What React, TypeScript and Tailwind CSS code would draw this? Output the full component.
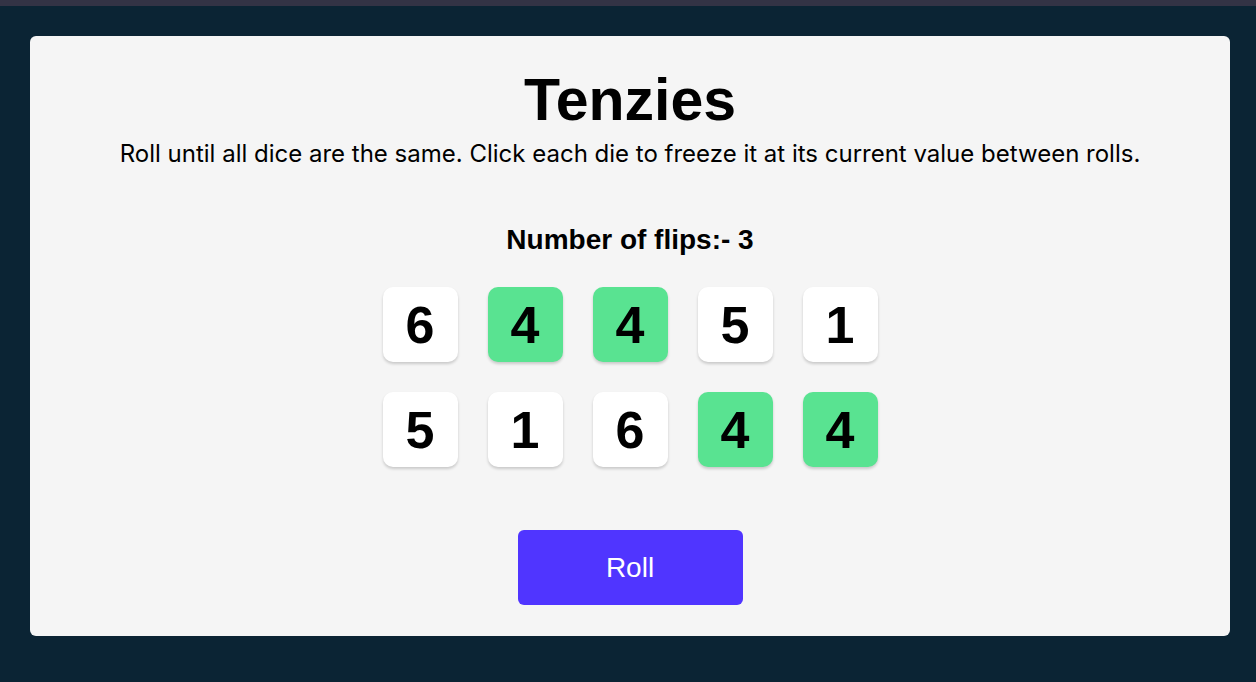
import React from 'react';

const dice = [
  { value: 6, held: false },
  { value: 4, held: true },
  { value: 4, held: true },
  { value: 5, held: false },
  { value: 1, held: false },
  { value: 5, held: false },
  { value: 1, held: false },
  { value: 6, held: false },
  { value: 4, held: true },
  { value: 4, held: true },
];

const Die: React.FC<{ value: number; held: boolean }> = ({ value, held }) => (
  <button
    className={`flex h-[75px] w-[75px] items-center justify-center rounded-[10px] shadow-[0_2px_3px_rgba(0,0,0,0.18)] font-['Liberation_Sans',Arial,sans-serif] text-[52px] font-bold text-black ${
      held ? 'bg-[#59E391]' : 'bg-white'
    }`}
  >
    {value}
  </button>
);

export default function App() {
  return (
    <div className="min-h-screen bg-[#0B2434]">
      <div className="h-[6px] bg-[#333345]" />
      <div className="pl-[30px] pt-[30px]">
        <main className="flex h-[600px] w-[1200px] flex-col items-center rounded-[6px] bg-[#F5F5F5]">
          <h1 className="mt-[31px] font-['Liberation_Sans',Arial,sans-serif] text-[59px] font-bold leading-[66px] text-black">
            Tenzies
          </h1>
          <p className="mt-[6px] font-['Inter',sans-serif] text-[24px] leading-[30px] text-black">
            Roll until all dice are the same. Click each die to freeze it at its current value between rolls.
          </p>
          <h2 className="mt-[55px] font-['Liberation_Sans',Arial,sans-serif] text-[28px] font-bold leading-[32px] text-black">
            Number of flips:- 3
          </h2>
          <div className="mt-[31px] grid grid-cols-5 gap-[30px]">
            {dice.map((d, i) => (
              <Die key={i} value={d.value} held={d.held} />
            ))}
          </div>
          <button className="mt-[63px] h-[75px] w-[225px] rounded-[6px] bg-[#5035FF] font-['Liberation_Sans',Arial,sans-serif] text-[28px] text-white">
            Roll
          </button>
        </main>
      </div>
    </div>
  );
}
